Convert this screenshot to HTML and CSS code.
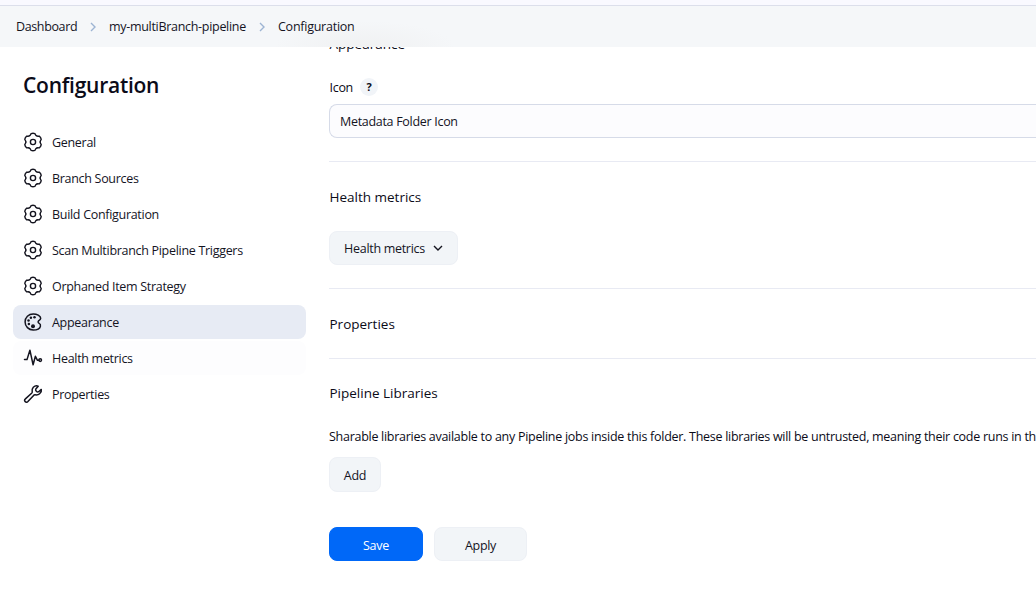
FILE: index.html
```html
<!DOCTYPE html>
<html lang="en">
<head>
<meta charset="utf-8">
<title>Configuration</title>
<link rel="stylesheet" href="styles.css">
</head>
<body>
<svg class="defs" aria-hidden="true">
  <symbol id="gear" viewBox="0 0 20 20">
    <g fill="none" stroke="currentColor" stroke-width="1.4" stroke-linecap="round" stroke-linejoin="round">
      <path id="lobe" d="M6.35 3.68C7.500 4 7.500 2 8.200 1.550Q10 .9 11.800 1.550C12.500 2 12.500 4 13.650 3.680"/>
      <use href="#lobe" transform="rotate(60 10 10)"/>
      <use href="#lobe" transform="rotate(120 10 10)"/>
      <use href="#lobe" transform="rotate(180 10 10)"/>
      <use href="#lobe" transform="rotate(240 10 10)"/>
      <use href="#lobe" transform="rotate(300 10 10)"/>
      <circle cx="10" cy="10" r="2.600"/>
    </g>
  </symbol>
</svg>
<div class="topline"></div>
<nav class="crumbs">
  <span class="crumb c1">Dashboard</span>
  <svg class="sep" viewBox="0 0 6 10"><path d="M1 1l4 4-4 4"/></svg>
  <span class="crumb c2">my-multiBranch-pipeline</span>
  <svg class="sep" viewBox="0 0 6 10"><path d="M1 1l4 4-4 4"/></svg>
  <span class="crumb c3">Configuration</span>
</nav>
<div class="page">
  <aside class="side">
    <h1>Configuration</h1>
    <a class="item"><svg class="ico"><use href="#gear"/></svg><span>General</span></a>
    <a class="item"><svg class="ico"><use href="#gear"/></svg><span>Branch Sources</span></a>
    <a class="item"><svg class="ico"><use href="#gear"/></svg><span>Build Configuration</span></a>
    <a class="item"><svg class="ico"><use href="#gear"/></svg><span>Scan Multibranch Pipeline Triggers</span></a>
    <a class="item"><svg class="ico"><use href="#gear"/></svg><span>Orphaned Item Strategy</span></a>
    <a class="item active"><svg class="ico" viewBox="0 0 20 20"><path class="line" d="M16.200 11.300c-1.200-.6-1.500-1.800-.4-2.700 1-.7 1.900-1.300 1.900-2.300 0-1-1-2.200-2.500-3.100C13.700 2.300 11.800 2 10.200 2 5.500 2 2.100 5.400 2.100 9.900s3.500 8.100 8.100 8.100c3.700 0 6.700-1.400 7.200-3.700.3-1.400-.2-2.500-1.200-3z"/><circle cx="11.500" cy="5.300" r="1.250"/><circle cx="7.900" cy="5.700" r="1.250"/><circle cx="5.500" cy="8.400" r="1.250"/><circle cx="5.900" cy="11.900" r="1.250"/><circle cx="10" cy="14.200" r="2"/></svg><span>Appearance</span></a>
    <a class="item hover"><svg class="ico" viewBox="0 0 20 20"><path class="line" d="M1.500 11.600H4L6.900 2.200l3.200 14.600 2.300-8.500 2.100 4H16"/><circle class="line" cx="17.200" cy="12.100" r="1.300"/></svg><span>Health metrics</span></a>
    <a class="item"><svg class="ico" viewBox="0 0 20 20"><path class="line" d="M18.300 5.400l-2.700 2.300c-.7.400-1.700.1-2.300-.5s-.9-1.500-.5-2.200l2.400-2.800c-1.500-.7-3.500-.3-4.900 1C8.900 4.700 8.900 6.300 9.200 7.800c.1.600-.1 1-.6 1.500l-6.200 5.600c-1.300 1.100-.9 2-.2 2.700s1.800 1.100 2.700 0l5.700-6.200c.5-.5.9-.7 1.500-.6 1.600.3 3.100.200 4.500-1.100 1.500-1.300 2.100-2.800 1.700-4.300z"/></svg><span>Properties</span></a>
  </aside>
  <main class="main">
    <h2 class="cut">Appearance</h2>
    <div class="label"><span>Icon</span><b class="help">?</b></div>
    <div class="select">Metadata Folder Icon</div>
    <section class="sec s-health">
      <h2>Health metrics</h2>
      <button class="btn b-health"><span>Health metrics</span><svg class="chev" viewBox="0 0 10 6"><path d="M1 1l4 4 4-4"/></svg></button>
    </section>
    <section class="sec s-props"><h2>Properties</h2></section>
    <section class="sec s-libs">
      <h2>Pipeline Libraries</h2>
      <p>Sharable libraries available to any Pipeline jobs inside this folder. These libraries will be untrusted, meaning their code runs in th</p>
      <button class="btn b-add">Add</button>
    </section>
    <div class="actions">
      <button class="btn primary">Save</button>
      <button class="btn b-apply">Apply</button>
    </div>
  </main>
</div>
</body>
</html>
```

FILE: styles.css
```css
* { box-sizing: border-box; }
body { margin: 0; width: 1036px; height: 605px; overflow: hidden; background: #fff; color: #14141f; font: 12.5px/18px "Open Sans", "Noto Sans", sans-serif; letter-spacing: -.3px; white-space: nowrap; }
.defs { display: none; }
.topline { height: 6px; background: #f9f9ff; border-bottom: 1px solid #dcdfeb; }
.crumbs { height: 41px; display: flex; align-items: center; padding-left: 16px; background: radial-gradient(ellipse 90px 26px at 365px 41px, #f0f1f2, #f5f7f9); }
.sep { width: 6px; height: 10px; margin: 0 13px; fill: none; stroke: #9db4d3; stroke-width: 1.4; }
.c1 { width: 61px; letter-spacing: -.37px; }
.c2 { width: 137px; }
.c3 { letter-spacing: -.25px; }
.page { display: flex; height: 558px; overflow: hidden; }
.side { width: 329px; flex: none; padding: 22px 23px 0 13px; }
h1 { margin: 0 0 24px; padding-left: 10px; font-size: 21px; line-height: 32px; font-weight: 600; letter-spacing: -.25px; color: #0b0b18; }
.item { display: flex; align-items: center; height: 34px; margin-bottom: 2px; padding-left: 10px; border-radius: 8px; }
.item span { padding-top: 2px; }
.ico { width: 20px; height: 20px; margin-right: 9px; flex: none; fill: currentColor; }
.line { fill: none; stroke: currentColor; stroke-width: 1.5; stroke-linecap: round; stroke-linejoin: round; }
.active { background: #e7ebf4; }
.hover { background: #fdfdfe; }
.main { width: 707px; flex: none; }
h2 { margin: 0; padding-left: .5px; font-size: 13.5px; line-height: 20px; font-weight: 400; letter-spacing: 0; color: #0b0b18; }
.cut { margin-top: -13px; }
.label { display: flex; align-items: center; height: 18px; margin: 24px 0 8px; color: #0b0b18; }
.label span { padding: 2px 0 0 .5px; }
.help { width: 18px; height: 18px; margin-left: 7px; border-radius: 50%; background: #f1f4f8; font-size: 11px; text-align: center; }
.select { height: 34px; padding: 8px 10px 6px; border: 1px solid #d6dbe8; border-right: 0; border-radius: 8px 0 0 8px; background: #fcfcfe; }
.sec { border-top: 1px solid #e8eaf3; }
.s-health { margin-top: 23px; height: 127px; padding-top: 25px; }
.s-props { height: 70px; padding-top: 25px; }
.s-libs { height: 169px; padding-top: 24px; }
p { margin: 25px 0 11px; line-height: 18px; letter-spacing: -.278px; color: #0b0b18; }
.btn { display: flex; align-items: center; justify-content: center; height: 34px; padding: 2px 0 0; border: 1px solid #edf0f5; border-radius: 8px; background: #f2f5f8; color: inherit; font: inherit; letter-spacing: inherit; }
.b-health { width: 129px; margin-top: 24px; padding: 0; }
.b-health span { padding-top: 2px; }
.chev { width: 10px; height: 6px; margin-left: 8px; fill: none; stroke: currentColor; stroke-width: 1.4; }
.b-add { width: 52px; height: 35px; }
.actions { display: flex; gap: 11px; }
.actions .btn { padding-top: 3px; }
.primary { width: 94px; background: #0068f8; border-color: #0068f8; color: #fff; }
.b-apply { width: 93px; }
```
